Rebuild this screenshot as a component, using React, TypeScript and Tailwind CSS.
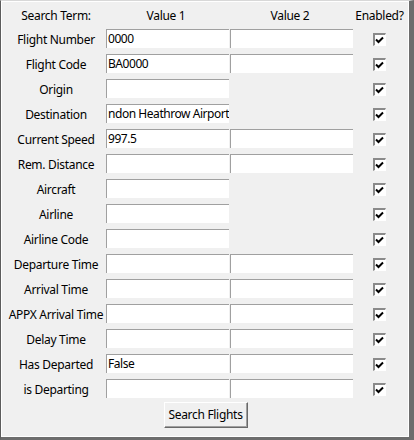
const rows: { label: string; v1: string; v2?: boolean }[] = [
  { label: "Flight Number", v1: "0000", v2: true },
  { label: "Flight Code", v1: "BA0000", v2: true },
  { label: "Origin", v1: "" },
  { label: "Destination", v1: "ndon Heathrow Airport" },
  { label: "Current Speed", v1: "997.5", v2: true },
  { label: "Rem. Distance", v1: "", v2: true },
  { label: "Aircraft", v1: "" },
  { label: "Airline", v1: "" },
  { label: "Airline Code", v1: "" },
  { label: "Departure Time", v1: "", v2: true },
  { label: "Arrival Time", v1: "", v2: true },
  { label: "APPX Arrival Time", v1: "", v2: true },
  { label: "Delay Time", v1: "", v2: true },
  { label: "Has Departed", v1: "False", v2: true },
  { label: "is Departing", v1: "", v2: true },
];

function Entry({ text }: { text?: string }) {
  return (
    <div className="mt-[2px] mr-[1px] self-start h-[19px] bg-white border-t border-l border-r-0 border-b-0 border-[#a0a0a0] pl-[1px] overflow-hidden whitespace-nowrap leading-[18px] text-black tracking-[-0.45px]">
      {text}
    </div>
  );
}

function Check() {
  return (
    <div className="w-[13px] h-[13px] bg-white border-t-2 border-l-2 border-t-[#8a8a8a] border-l-[#8a8a8a] border-b border-r border-b-white border-r-white flex items-center justify-center">
      <svg width="9" height="9" viewBox="0 0 9 9">
        <path d="M1 3.5 L3.5 6 L8 1.5" stroke="#000" strokeWidth="2" fill="none" />
      </svg>
    </div>
  );
}

export default function App() {
  return (
    <div
      className="w-[414px] h-[440px] bg-[#f0f0f0] border-t border-l border-t-[#d8d8d8] border-l-[#5c5c5c] border-r-[5px] border-b-[3px] border-r-[#6d6d6d] border-b-[#6d6d6d] text-[12px] tracking-[-0.3px] text-black"
      style={{ fontFamily: '"Noto Sans", "Open Sans", sans-serif' }}
    >
      <div className="h-full border border-white pl-[4px] pt-[3px]">
        <div className="grid grid-cols-[100px_124px_124px_51px] grid-rows-[22px] auto-rows-[25px]">
          <div className="flex items-center justify-center">Search Term:</div>
          <div className="flex items-center justify-center pr-[4px]">Value 1</div>
          <div className="flex items-center justify-center pr-[4px]">Value 2</div>
          <div className="flex items-center justify-center">Enabled?</div>
          {rows.map((r) => (
            <div key={r.label} className="contents">
              <div className="flex items-center justify-center whitespace-nowrap">{r.label}</div>
              <Entry text={r.v1} />
              {r.v2 ? <Entry /> : <div />}
              <div className="flex items-center justify-center pr-[1px]">
                <Check />
              </div>
            </div>
          ))}
        </div>
        <div className="flex justify-center w-[399px]">
          <button className="w-[84px] h-[26px] bg-[#f0f0f0] border border-t-white border-l-white border-r-[#696969] border-b-[#696969] shadow-[inset_-1px_-1px_0_#a0a0a0] text-[12px] tracking-[-0.3px] text-black">
            Search Flights
          </button>
        </div>
      </div>
    </div>
  );
}
